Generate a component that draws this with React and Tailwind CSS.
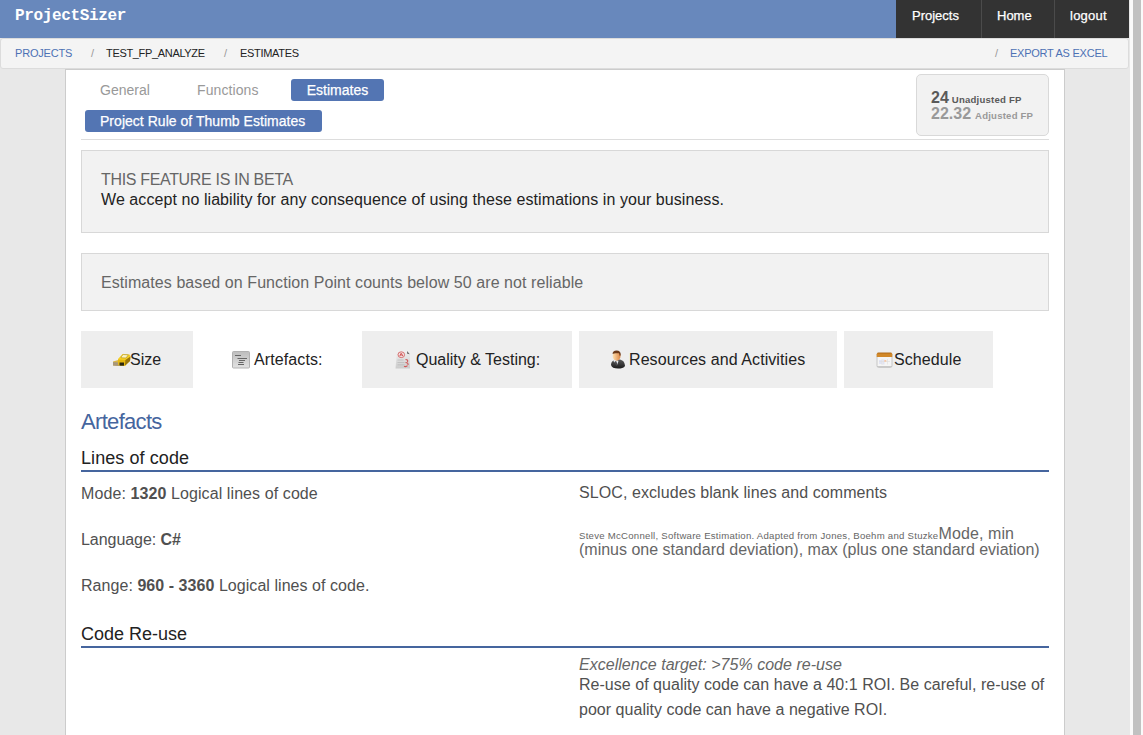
import React from "react";

function TapeIcon() {
  return (
    <svg width="18" height="16" viewBox="0 0 18 16" className="shrink-0">
      <path d="M0 9.500 L7 7.500 L8 12.500 L5 14 L0 13.500Z" fill="#d8b64a" />
      <path d="M0 10 L6 10.500 L6 14 L0 13.500Z" fill="#a8977a" />
      <path d="M5 7 L9.500 2 L16.500 2.500 L17.500 4.500 L17 9 L12 13.700 L5.500 13.300Z" fill="#f6cf22" />
      <path d="M5 7.500 L12.300 8 L12 13.700 L5.500 13.300Z" fill="#e6b80f" />
      <path d="M12.300 8 L17.500 4.500 L17 9 L12 13.700Z" fill="#9a760c" />
      <path d="M8.600 4.200 L10.300 2.500 L15.300 2.900 L13 6 L8 5.700Z" fill="#fbf3bf" stroke="#9b7c18" strokeWidth=".5" />
      <path d="M6.500 10.500h4.500v3.200h-4.500z" fill="#2c2810" />
    </svg>
  );
}

function ArtefactIcon() {
  return (
    <svg width="18" height="18" viewBox="0 0 18 18" className="shrink-0">
      <defs>
        <linearGradient id="artefactFill" x1="0" y1="0" x2="0" y2="1">
          <stop offset="0" stopColor="#bdbdbd" />
          <stop offset="1" stopColor="#e2e2e2" />
        </linearGradient>
      </defs>
      <rect x=".5" y=".5" width="17" height="16.5" rx="1" fill="url(#artefactFill)" stroke="#b1b1b1" />
      <path d="M3 4.500h6M5.500 7.500h9.500M7 9.500h6M6.500 11.500h5M6 13.500h6" stroke="#666" strokeWidth="1.1" />
    </svg>
  );
}

function QualityIcon() {
  return (
    <svg width="16" height="19" viewBox="0 0 16 19" className="shrink-0">
      <defs>
        <linearGradient id="sheetFill" x1="0" y1="0" x2="0" y2="1">
          <stop offset="0" stopColor="#f1f1f1" />
          <stop offset="1" stopColor="#cbcbcb" />
        </linearGradient>
      </defs>
      <path d="M2 1h9.500l3.500 3.500v14H.5z" fill="url(#sheetFill)" />
      <path d="M12 1 L14.800 4.300 L12.200 3.800Z" fill="#666" />
      <ellipse cx="6.300" cy="4.700" rx="3.300" ry="2.900" fill="#f3dede" stroke="#d46565" strokeWidth=".9" />
      <path d="M4.800 6 L6.200 3.200 L7.800 6 M5.300 5h2" fill="none" stroke="#cb4242" strokeWidth=".8" />
      <path d="M2.500 10h6M2.500 12.500h7M2.500 14.800h7" stroke="#bbb" strokeWidth=".8" />
      <path d="M10.500 9.500q3 0 2 2.500M10.500 12.500q3 0 2.500 2.500M9 16.200q2 1 3.500-.5" fill="none" stroke="#d05656" strokeWidth="1.100" />
    </svg>
  );
}

function PersonIcon() {
  return (
    <svg width="16" height="19" viewBox="0 0 16 19" className="shrink-0">
      <defs>
        <linearGradient id="faceFill" x1="0" y1="0" x2="1" y2="0">
          <stop offset="0" stopColor="#ffe0b0" />
          <stop offset="1" stopColor="#dc8645" />
        </linearGradient>
        <linearGradient id="suitFill" x1="0" y1="0" x2="0" y2="1">
          <stop offset="0" stopColor="#595959" />
          <stop offset="1" stopColor="#1c1c1c" />
        </linearGradient>
      </defs>
      <path d="M1 15c0-3 1.5-4.5 5-5.500h4c3.500 1 4.700 3 5 6.500-1 2-4 2.500-7 2.500-4 0-6.500-1-7-3.500z" fill="url(#suitFill)" />
      <path d="M3 10.800l1.500-1 4 1-1.200 4z" fill="#e9edf2" />
      <path d="M4.800 11.300h1.500l1.200 3.200-.8 1.500-1.500-2z" fill="#49494d" />
      <ellipse cx="6.600" cy="5.900" rx="3.900" ry="4.900" fill="url(#faceFill)" />
      <path d="M2.600 4C2.500 1.800 4 .5 6.500.5c2.900 0 4.500 1.700 4.200 4.500L9.900 6.300 9 3.300C6.500 3.400 4.500 2.800 2.600 4z" fill="#6b3a1a" />
    </svg>
  );
}

function CalendarIcon() {
  return (
    <svg width="17" height="16" viewBox="0 0 17 16" className="shrink-0">
      <rect x="1" y="1" width="15" height="14.300" rx="1.500" fill="#f5f5f5" stroke="#c6c6c6" />
      <path d="M.7 2.200Q.8.700 2 .700h13q1.200 0 1.300 1.500V5H.7z" fill="#d18829" />
      <path d="M1.500 1.200h14" stroke="#b56a14" strokeWidth=".8" />
      <path d="M3 8h3v4H3zM6.500 7.500h2v5h-2z" fill="#e1e4f4" />
      <path d="M11.500 7v5.500M6 7v6M3 9.500h11" stroke="#ddd" strokeWidth=".6" />
      <path d="M8.300 8h2v1.800h-2z" fill="#f5c9a8" />
      <path d="M1.500 14.700h14" stroke="#b5b5b5" strokeWidth=".8" />
    </svg>
  );
}

function Header() {
  return (
    <header className="flex h-[38px] justify-between bg-[#6888bc] pl-[15px] text-white">
      <div className="pt-[4px] font-['Liberation_Mono',monospace] text-[16px] leading-[24px] font-bold tracking-[0.45px]">
        <span className="inline-block tracking-[-0.35px]">ProjectSizer</span>
      </div>
      <nav className="flex bg-[#333] text-[13px] leading-[32px] [-webkit-text-stroke:0.25px_white]">
        <a className="w-[85px] pl-[16px]">Projects</a>
        <a className="w-[73px] border-l border-[#4b4b4b] pl-[15px]">Home</a>
        <a className="w-[75px] border-l border-[#4b4b4b] pl-[15px] tracking-[0.25px]">logout</a>
      </nav>
    </header>
  );
}

function Breadcrumbs() {
  return (
    <div className="flex h-[31px] w-[1129px] items-center rounded-[3px] border border-[#dcdcdc] bg-[#f4f4f4] pl-[14px] text-[11px] leading-[29px] text-[#222]">
      <a className="w-[76px] tracking-[-0.2px] text-[#4d71b4]">PROJECTS</a>
      <span className="w-[15px] text-[#999]">/</span>
      <span className="w-[118px] tracking-[-0.33px]">TEST_FP_ANALYZE</span>
      <span className="w-[16px] text-[#999]">/</span>
      <span className="tracking-[-0.3px]">ESTIMATES</span>
      <span className="ml-auto w-[15px] text-[#999]">/</span>
      <a className="mr-[20px] w-[98px] tracking-[-0.25px] whitespace-nowrap text-[#4d71b4]">EXPORT AS EXCEL</a>
    </div>
  );
}

function TopTabs() {
  return (
    <div className="flex h-[70px] justify-between border-b border-[#ddd]">
      <div className="pt-[9px] pl-[4px] text-[14px] leading-[22px]">
        <div className="flex text-[#999]">
          <a className="w-[97px] pl-[15px]">General</a>
          <a className="w-[109px] pl-[15px] tracking-[0.1px]">Functions</a>
          <a className="w-[93px] rounded-[3px] bg-[#5375b3] text-center text-white [-webkit-text-stroke:0.25px_white]">Estimates</a>
        </div>
        <a className="mt-[9px] block w-[237px] rounded-[3px] bg-[#5375b3] pl-[15px] tracking-[0.03px] text-white [-webkit-text-stroke:0.25px_white]">
          Project Rule of Thumb Estimates
        </a>
      </div>
      <div className="mt-[4px] h-[62px] w-[133px] rounded-[5px] border border-[#d9d9d9] bg-[#f2f2f2] pt-[15px] pl-[14px] font-bold whitespace-nowrap">
        <div className="text-[16px] leading-[16px] text-[#5a5a5a]">
          24<span className="ml-[3px] text-[9.600px] leading-none tracking-[0.2px]">Unadjusted FP</span>
        </div>
        <div className="text-[16px] leading-[16px] text-[#999]">
          22.32<span className="ml-[4px] text-[9.600px] leading-none tracking-[0.2px]">Adjusted FP</span>
        </div>
      </div>
    </div>
  );
}

function SectionTabs() {
  return (
    <div className="mt-[20px] flex h-[57px] items-center text-[16px] leading-[57px] whitespace-nowrap text-[#222]">
      <a className="flex h-full w-[112px] items-center bg-[#eee] pl-[32px]"><TapeIcon /><span className="-ml-px">Size</span></a>
      <a className="flex h-full w-[169px] items-center pl-[39px]"><ArtefactIcon /><span className="ml-[4px] tracking-[0.1px]">Artefacts:</span></a>
      <a className="mr-[7px] flex h-full w-[210px] items-center bg-[#eee] pl-[33px]"><QualityIcon /><span className="ml-[5px]">Quality &amp; Testing:</span></a>
      <a className="mr-[7px] flex h-full w-[258px] items-center bg-[#eee] pl-[31px]"><PersonIcon /><span className="ml-[3px] tracking-[0.08px]">Resources and Activities</span></a>
      <a className="flex h-full w-[149px] items-center bg-[#eee] pl-[32px]"><CalendarIcon /><span className="ml-px tracking-[0.08px]">Schedule</span></a>
    </div>
  );
}

export default function App() {
  return (
    <div className="flex h-[735px] w-[1143px] overflow-hidden bg-[#fafafa] font-['Liberation_Sans',Arial,sans-serif]">
      <div className="w-[1130px] bg-[#e8e8e8]">
        <div className="w-[1129px]">
          <Header />
          <Breadcrumbs />
        </div>
        <main className="ml-[65px] h-[666px] w-[1000px] border border-b-0 border-[#ccc] bg-white px-[15px] text-[16px] text-[#505050]">
          <TopTabs />
          <div className="mt-[10px] h-[83px] border border-[#d8d8d8] bg-[#f2f2f2] px-[19px] pt-[19px] leading-[20px] text-[#666]">
            <h4 className="tracking-[-0.33px]">THIS FEATURE IS IN BETA</h4>
            <p className="tracking-[0.07px] text-[#222]">We accept no liability for any consequence of using these estimations in your business.</p>
          </div>
          <div className="mt-[20px] h-[58px] border border-[#d8d8d8] bg-[#f2f2f2] px-[19px] leading-[57px] tracking-[0.07px] text-[#666]">
            Estimates based on Function Point counts below 50 are not reliable
          </div>
          <SectionTabs />
          <h2 className="mt-[18px] h-[32px] text-[22px] leading-[32px] tracking-[-0.68px] text-[#45659e]">Artefacts</h2>
          <h3 className="mt-[7px] h-[27px] border-b-2 border-[#45659e] text-[18px] leading-[26px] tracking-[0.08px] text-[#222]">Lines of code</h3>
          <section className="flex h-[150px] pt-[10px]">
            <div className="flex w-[498px] flex-col gap-[22px] leading-[24px]">
              <p className="tracking-[0.09px]">Mode: <b>1320</b> Logical lines of code</p>
              <p className="tracking-[-0.05px]">Language: <b>C#</b></p>
              <p className="tracking-[0.05px]">Range: <b>960 - 3360</b> Logical lines of code.</p>
            </div>
            <div className="whitespace-nowrap">
              <p className="leading-[22px] tracking-[0.08px]">SLOC, excludes blank lines and comments</p>
              <p className="mt-[22px] leading-[16px] text-[#666]">
                <span className="text-[9.600px] leading-none tracking-[0.26px]">Steve McConnell, Software Estimation. Adapted from Jones, Boehm and Stuzke</span><span className="tracking-[0.1px]">Mode, min</span>
                <br />(minus one standard deviation), max (plus one standard eviation)
              </p>
            </div>
          </section>
          <h3 className="h-[26px] border-b-2 border-[#45659e] text-[18px] leading-[24px] text-[#222]">Code Re-use</h3>
          <div className="ml-[498px] pt-[7px] whitespace-nowrap">
            <p className="leading-[19px] tracking-[0.03px] text-[#666] italic">Excellence target: &gt;75% code re-use</p>
            <p className="-mt-[2px] leading-[25px] tracking-[0.03px]">Re-use of quality code can have a 40:1 ROI. Be careful, re-use of<br />poor quality code can have a negative ROI.</p>
          </div>
        </main>
      </div>
      <div className="ml-[3px] w-[8px] bg-[#c1c1c1]" />
    </div>
  );
}
